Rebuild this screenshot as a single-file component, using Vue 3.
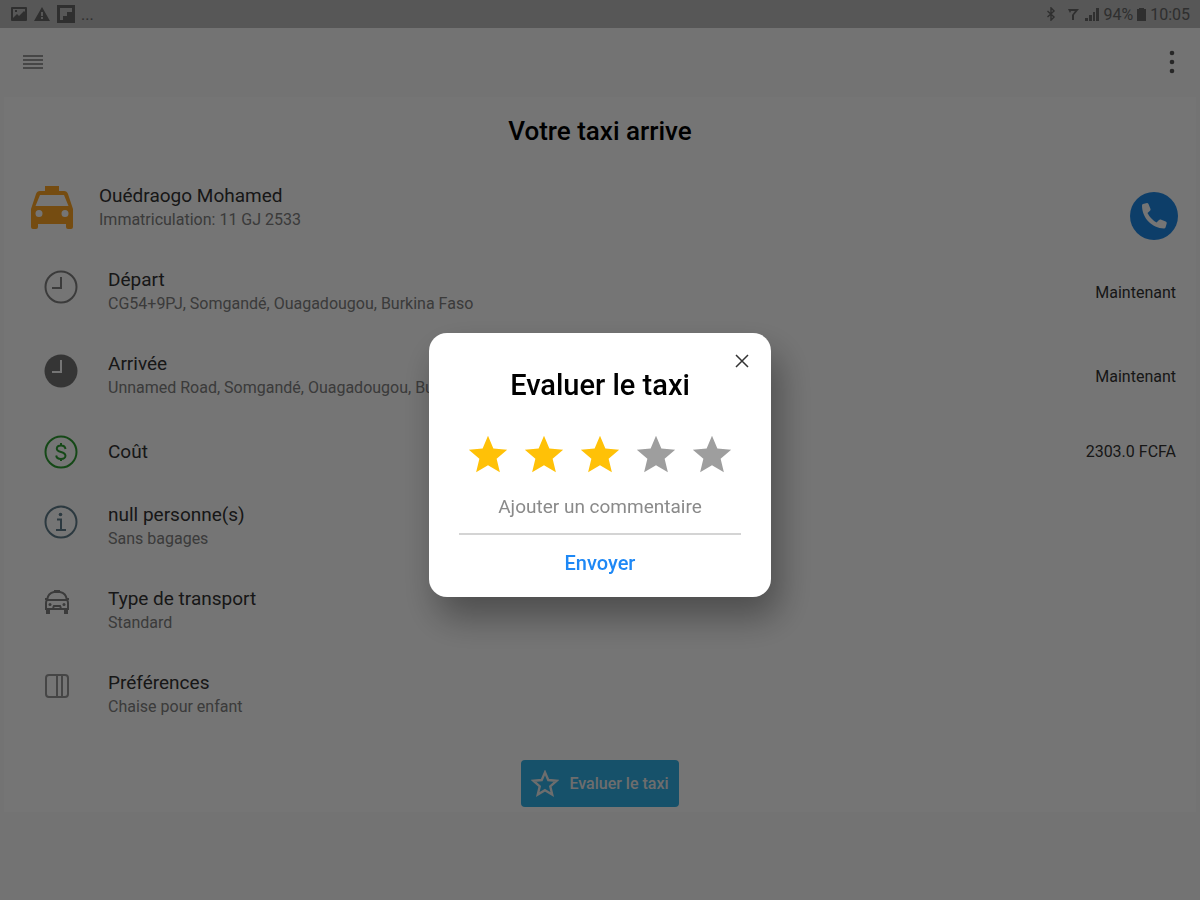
<script setup>
  import { ref } from 'vue';

  const rating = ref(3);
  const comment = ref('');
  const showRating = ref(true);

  const rows = [
    {
      icon: 'clock',
      title: 'Départ',
      text: 'CG54+9PJ, Somgandé, Ouagadougou, Burkina Faso',
      value: 'Maintenant',
    },
    {
      icon: 'clock-filled',
      title: 'Arrivée',
      text: 'Unnamed Road, Somgandé, Ouagadougou, Burkina Faso',
      value: 'Maintenant',
    },
    { icon: 'dollar', title: 'Coût', value: '2303.0 FCFA' },
    { icon: 'about', title: 'null personne(s)', text: 'Sans bagages' },
    { icon: 'car', title: 'Type de transport', text: 'Standard' },
    { icon: 'panel', title: 'Préférences', text: 'Chaise pour enfant' },
  ];

  const starPath = 'M12 17.3 18.2 21l-1.7-7L22 9.2l-7.2-.6L12 2 9.2 8.6 2 9.2 7.5 14l-1.7 7z';
</script>

<template>
  <div class="screen">
    <div class="status">
      <div class="status-group">
        <svg width="18" height="16" viewBox="0 0 18 16">
          <path
            fill-rule="evenodd"
            d="M2 1h14q1 0 1 1v12q0 1-1 1H2q-1 0-1-1V2q0-1 1-1zM3 3v9l4-4 2 2 5-5 1 1V3zM5 4h2v2H5z"
          />
        </svg>
        <svg width="18" height="16" viewBox="0 0 18 16">
          <path fill-rule="evenodd" d="M9 1 17 15H1zM8 6v4h2V6zM8 11v2h2v-2z" />
        </svg>
        <svg width="20" height="20" viewBox="0 0 20 20">
          <path fill-rule="evenodd" d="M1 1h18v18H1zM4 4v12h3v-4h4V8h5V4z" />
        </svg>
        <span class="dots">...</span>
      </div>
      <div class="status-group right">
        <svg width="12" height="14" viewBox="0 0 12 16">
          <path
            d="M2 4.5 9.5 11.5 6 15V1l3.5 3.5L2 11.5"
            fill="none"
            stroke="currentColor"
            stroke-width="1.6"
          />
        </svg>
        <svg width="14" height="14" viewBox="0 0 14 14">
          <path d="M1 2h11L7 8v5H5V8l3-4H4L3 6z" />
        </svg>
        <svg width="14" height="14" viewBox="0 0 14 14">
          <path d="M0 11h3v3H0zM4 8h3v6H4zM8 5h2v9H8zM11 1h3v13h-3z" />
        </svg>
        <span>94%</span>
        <svg width="9" height="13" viewBox="0 0 9 13">
          <path d="M2 0h5v1h2v12H0V1h2z" />
        </svg>
        <span>10:05</span>
      </div>
    </div>

    <header class="bar">
      <button class="icon-btn" aria-label="Menu">
        <svg width="20" height="16" viewBox="0 0 20 16">
          <path d="M0 1h20v2H0zM0 5h20v2H0zM0 9h20v2H0zM0 13h20v2H0z" />
        </svg>
      </button>
      <button class="icon-btn more" aria-label="Options">
        <svg width="6" height="24" viewBox="0 0 6 24">
          <circle cx="3" cy="3" r="2.300" />
          <circle cx="3" cy="12" r="2.300" />
          <circle cx="3" cy="21" r="2.300" />
        </svg>
      </button>
    </header>

    <main class="card">
      <h1>Votre taxi arrive</h1>

      <div class="row driver">
        <svg class="taxi" width="44" height="44" viewBox="0 0 44 44">
          <path
            fill-rule="evenodd"
            d="M15 0h14v5h5q3 0 4 3l5 15v18q0 2-2 2h-3q-2 0-2-2v-3H8v3q0 2-2 2H3q-2 0-2-2V23L6 8q1-3 4-3h5zM10 9 5.5 20h33L34 9zM9 24a3.500 3.500 0 1 0 0 7 3.500 3.500 0 0 0 0-7zM35 24a3.500 3.500 0 1 0 0 7 3.500 3.500 0 0 0 0-7z"
          />
        </svg>
        <div class="info">
          <div class="title">Ouédraogo Mohamed</div>
          <div class="text">Immatriculation: 11 GJ 2533</div>
        </div>
        <button class="call" aria-label="Appeler">
          <svg width="28" height="28" viewBox="0 0 28 28">
            <path
              d="M3 2 7 1q1 0 1.500 1l2 5q.3 1-.5 1.700L7.500 11q3 6 9 9.500l2.500-2.500q.7-.7 1.700-.4l5 2q1.300.6 1 1.900l-1.200 4q-.3 1-1.500 1C12 26 2 16 2 3.500Q2 2.300 3 2z"
            />
          </svg>
        </button>
      </div>

      <div class="row" :class="{ single: !item.text }" v-for="item in rows" :key="item.title">
        <div class="lead" :class="item.icon">
          <svg v-if="item.icon == 'clock'" width="34" height="34" viewBox="0 0 34 34">
            <circle cx="17" cy="17" r="15.500" class="line" />
            <path d="M17 7v11H8" class="line" />
          </svg>
          <svg v-else-if="item.icon == 'clock-filled'" width="34" height="34" viewBox="0 0 34 34">
            <circle cx="17" cy="17" r="16.500" />
            <path d="M17 6v12H8" class="hand" />
          </svg>
          <svg v-else-if="item.icon == 'dollar'" width="34" height="34" viewBox="0 0 34 34">
            <circle cx="17" cy="17" r="15.500" class="line" />
            <path
              d="M21.500 14q-.5-3.500-4.500-3.500t-4.200 3q0 2.500 4.200 3.500t4.500 3.800q-.2 3.200-4.500 3.200t-4.800-3.500M17 8v3M17 23v3"
              class="line"
            />
          </svg>
          <svg v-else-if="item.icon == 'about'" width="34" height="34" viewBox="0 0 34 34">
            <circle cx="17" cy="17" r="15.500" class="line" />
            <path d="M13 14.500h4V25M12 25h10" class="line" />
            <circle cx="16.500" cy="9.500" r="1.800" />
          </svg>
          <svg v-else-if="item.icon == 'car'" width="26" height="26" viewBox="0 0 26 26">
            <path
              d="M3 11q1-7 7-8h6q6 1 7 8zM3 11q-1 1-1 3v6h22v-6q0-2-1-3M3 20v4h2v-4M21 20v4h2v-4M9 19l1-2h6l1 2M1 10h2M23 10h2"
              class="line"
            />
            <path d="M10 1h6v3h-6z" />
            <circle cx="6" cy="15.500" r="1.500" />
            <circle cx="20" cy="15.500" r="1.500" />
          </svg>
          <svg v-else width="26" height="26" viewBox="0 0 26 26">
            <rect x="2" y="2" width="22" height="22" rx="3" class="line" />
            <path d="M13 2v22M18 2v22" class="line" />
          </svg>
        </div>
        <div class="info">
          <div class="title">{{ item.title }}</div>
          <div class="text" v-if="item.text">{{ item.text }}</div>
        </div>
        <div class="value" v-if="item.value">{{ item.value }}</div>
      </div>

      <button class="rate" @click="showRating = true">
        <svg width="28" height="28" viewBox="0 0 24 24">
          <path :d="starPath" />
        </svg>
        <span>Evaluer le taxi</span>
      </button>
    </main>

    <div class="overlay" v-if="showRating">
      <form class="dialog" role="dialog" aria-labelledby="dialog-title" @submit.prevent="showRating = false">
        <button class="close" type="button" aria-label="Fermer" @click="showRating = false">
          <svg width="14" height="14" viewBox="0 0 14 14">
            <path d="M1 1l12 12M13 1 1 13" />
          </svg>
        </button>
        <h2 id="dialog-title">Evaluer le taxi</h2>
        <div class="stars">
          <button
            v-for="n in 5"
            :key="n"
            type="button"
            class="star"
            :class="{ active: n <= rating }"
            :aria-label="`${n} / 5`"
            @click="rating = n"
          >
            <svg width="46" height="46" viewBox="0 0 24 24">
              <path :d="starPath" />
            </svg>
          </button>
        </div>
        <input v-model="comment" type="text" placeholder="Ajouter un commentaire" aria-label="Ajouter un commentaire" />
        <button class="send" type="submit">Envoyer</button>
      </form>
    </div>
  </div>
</template>

<style>
  body {
    margin: 0;
    background: #fafafa;
  }
</style>

<style scoped>
  .screen {
    min-height: 100vh;
    font-family: Roboto, 'Liberation Sans', sans-serif;
    color: #333;
    background: #fafafa;
  }
  button {
    padding: 0;
    border: 0;
    background: none;
    font-family: inherit;
    color: inherit;
    cursor: pointer;
  }
  svg {
    display: block;
    flex: none;
    fill: currentColor;
  }
  .line {
    fill: none;
    stroke: currentColor;
    stroke-width: 2;
  }

  .status {
    display: flex;
    justify-content: space-between;
    align-items: center;
    height: 28px;
    padding: 0 10px;
    font-size: 16px;
    color: #666;
    background: #bdbdbd;
  }
  .status-group {
    display: flex;
    align-items: center;
    gap: 5px;
  }
  .status-group.right {
    gap: 4px;
  }
  .status-group.right svg:first-child {
    margin-right: 6px;
  }

  .bar {
    display: flex;
    justify-content: space-between;
    align-items: center;
    box-sizing: border-box;
    height: 69px;
    padding: 0 25px 2px 23px;
  }
  .icon-btn {
    color: #999;
  }
  .icon-btn.more {
    color: #555;
  }

  .card {
    display: flex;
    flex-direction: column;
    margin: 0 4px;
    padding-bottom: 5px;
    background: #fff;
  }
  h1 {
    margin: 0;
    padding: 18px 0 19px;
    font-size: 26px;
    font-weight: 500;
    line-height: 32px;
    text-align: center;
    color: #000;
  }
  .row {
    display: flex;
    align-items: center;
    box-sizing: border-box;
    min-height: 84px;
    padding: 0 20px 0 40px;
  }
  .row.single {
    min-height: 67px;
  }
  .row.driver {
    padding: 0 18px 0 26px;
  }
  .taxi {
    margin-right: 25px;
    color: #ffa726;
  }
  .lead {
    align-self: flex-start;
    width: 64px;
    padding-top: 20px;
    color: #808080;
  }
  .single .lead {
    align-self: center;
    padding-top: 0;
  }
  .lead.clock-filled {
    color: #757575;
  }
  .hand {
    fill: none;
    stroke: #fff;
    stroke-width: 2;
  }
  .lead.dollar {
    color: #2e9e33;
  }
  .lead.about {
    color: #607d8b;
  }
  .lead.panel {
    color: #999;
  }
  .info {
    flex: 1;
    min-width: 0;
  }
  .title,
  .text {
    line-height: 24px;
  }
  .title {
    font-size: 19px;
  }
  .text {
    font-size: 16px;
    color: #808080;
  }
  .value {
    font-size: 16px;
  }
  .call {
    display: flex;
    justify-content: center;
    align-items: center;
    align-self: flex-end;
    width: 48px;
    height: 48px;
    margin-bottom: 10px;
    border-radius: 50%;
    color: #fff;
    background: #1e88e5;
  }
  .rate {
    display: flex;
    align-items: center;
    align-self: center;
    gap: 10px;
    height: 47px;
    margin-top: 23px;
    padding: 0 10px;
    border-radius: 4px;
    font-size: 16px;
    font-weight: 500;
    color: #eee;
    background: #30b0e6;
  }
  .rate svg {
    fill: none;
    stroke: currentColor;
    stroke-width: 2;
  }

  .overlay {
    position: fixed;
    inset: 0;
    display: flex;
    justify-content: center;
    align-items: center;
    padding-top: 29px;
    background: rgba(0, 0, 0, 0.54);
  }
  .dialog {
    position: relative;
    display: flex;
    flex-direction: column;
    align-items: center;
    box-sizing: border-box;
    width: 342px;
    padding: 34px 30px 22px;
    border-radius: 18px;
    background: #fff;
    box-shadow: 8px 20px 36px rgba(0, 0, 0, 0.35);
  }
  .close {
    position: absolute;
    top: 21px;
    right: 22px;
    color: #333;
  }
  .close path {
    stroke: currentColor;
    stroke-width: 1.5;
  }
  h2 {
    margin: 0;
    font-size: 29px;
    font-weight: 500;
    line-height: 36px;
    color: #000;
  }
  .stars {
    display: flex;
    gap: 10px;
    margin-top: 29px;
  }
  .star {
    color: #9e9e9e;
  }
  .star.active {
    color: #ffc107;
  }
  input {
    box-sizing: border-box;
    width: 100%;
    height: 54px;
    margin-top: 3px;
    padding: 0;
    border: 0;
    border-bottom: 2px solid #d4d4d4;
    outline: none;
    font-family: inherit;
    font-size: 19px;
    text-align: center;
    color: #222;
    background: none;
  }
  input::placeholder {
    color: #8a8a8a;
    opacity: 1;
  }
  .send {
    margin-top: 16px;
    font-size: 20px;
    font-weight: 500;
    line-height: 24px;
    color: #1e88f5;
  }
</style>
